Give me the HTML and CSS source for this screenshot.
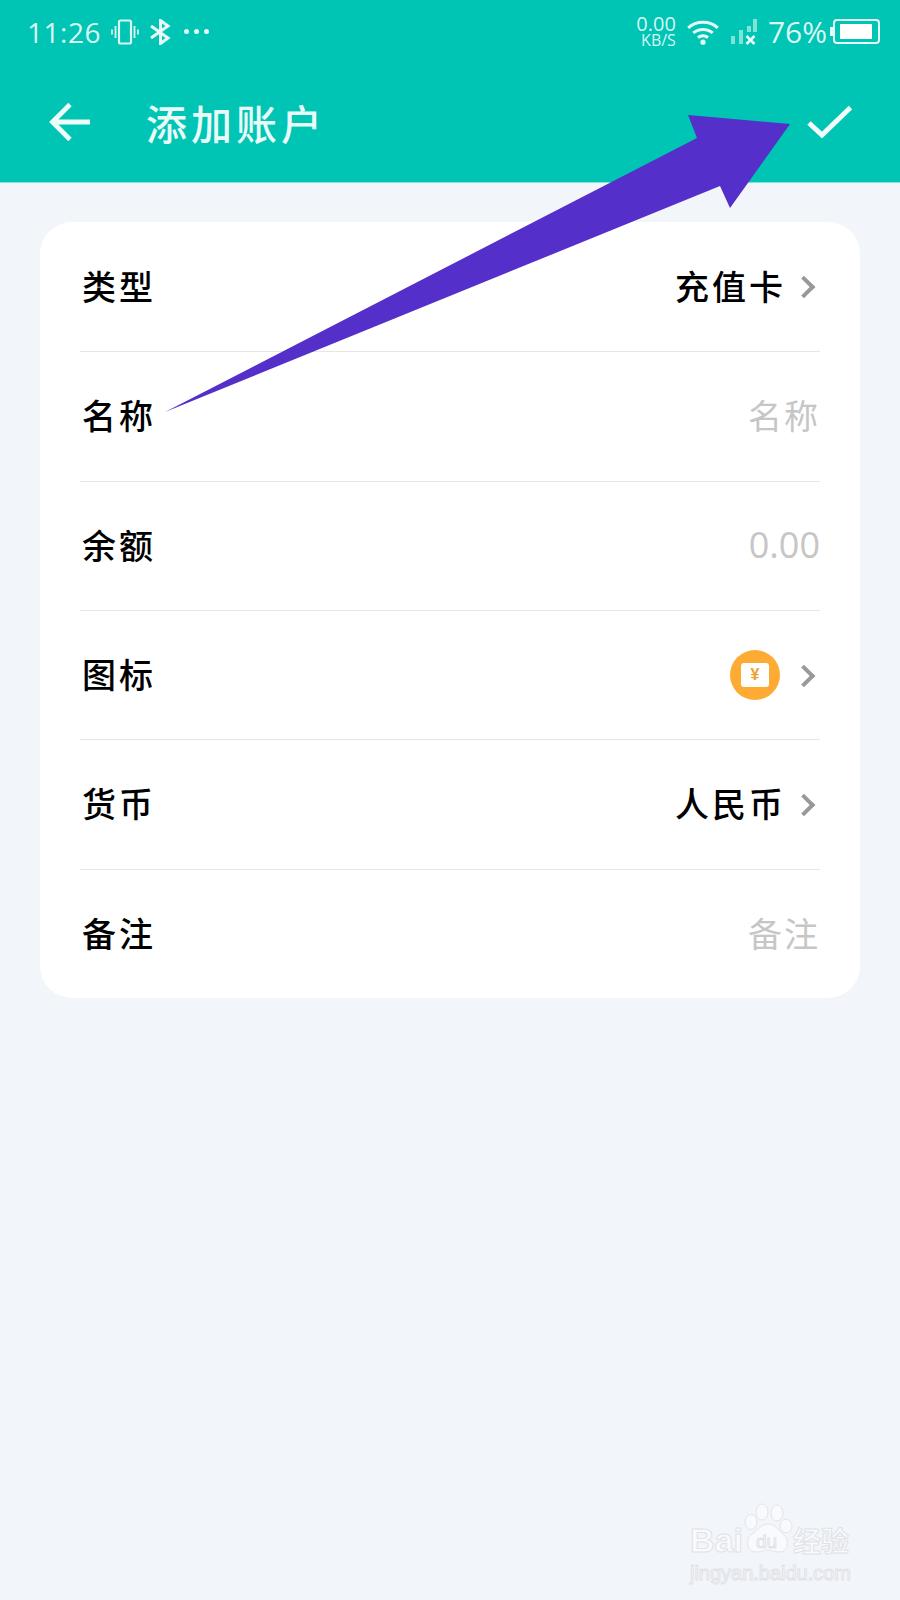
FILE: index.html
```html
<!DOCTYPE html>
<html lang="zh-CN">
<head>
  <meta charset="UTF-8">
  <meta name="viewport" content="width=device-width, initial-scale=1.0">
  <title>添加账户</title>
  <link rel="stylesheet" href="styles.css">
</head>
<body>
  <div class="page">
    <div class="header">
      <!-- Status bar -->
      <div class="status-bar">
        <div class="status-left">
          <span class="time">11:26</span>
          <svg class="icon-vibrate" viewBox="0 0 28 26" width="28" height="26">
            <rect x="8" y="1.5" width="12" height="23" rx="1.5" fill="none" stroke="#d9f7f3" stroke-width="2.200"/>
            <path d="M4.5 7v12M1 10.5v5M23.500 7v12M27 10.500v5" stroke="#d9f7f3" stroke-width="1.800" fill="none"/>
          </svg>
          <svg class="icon-bt" viewBox="0 0 22 26" width="22" height="26">
            <path d="M2 7l17 12-7.500 5.500V1.500L19 7 2 19" fill="none" stroke="#e6faf7" stroke-width="3"/>
          </svg>
          <div class="dots"><i></i><i></i><i></i></div>
        </div>
        <div class="status-right">
          <div class="speed"><span>0.00</span><span class="speed-unit">KB/S</span></div>
          <svg class="icon-wifi" viewBox="0 0 36 28" width="34" height="26">
            <path d="M2 9.500C11 1.500 25 1.500 34 9.500M7.500 15c6-5 15-5 21 0M12.500 20c3.500-2.500 7.500-2.500 11 0" fill="none" stroke="#e6faf7" stroke-width="3.200"/>
            <circle cx="18" cy="25" r="2.800" fill="#e6faf7"/>
          </svg>
          <svg class="icon-signal" viewBox="0 0 28 26" width="28" height="26">
            <rect x="1" y="17" width="4" height="8" fill="#7fe3d6"/>
            <rect x="9" y="11" width="4" height="14" fill="#7fe3d6"/>
            <rect x="17" y="7" width="4" height="6" fill="#7fe3d6"/>
            <rect x="23" y="0" width="4" height="13" fill="#7fe3d6"/>
            <path d="M16.500 17l8 8M24.500 17l-8 8" stroke="#e6faf7" stroke-width="2.600"/>
          </svg>
          <span class="battery-text">76%</span>
          <div class="battery"><div class="battery-fill"></div></div>
        </div>
      </div>

      <!-- Toolbar -->
      <div class="toolbar">
        <svg class="icon-back" viewBox="0 0 42 40" width="42" height="40">
          <path d="M21 2.500L3.500 20 21 37.500M3.500 20H41" fill="none" stroke="#eefcfa" stroke-width="4.800"/>
        </svg>
        <span class="title">添加账户</span>
        <svg class="icon-check" viewBox="0 0 46 34" width="46" height="34">
          <path d="M2 18l13 12L43.500 2.500" fill="none" stroke="#f2fdfb" stroke-width="5"/>
        </svg>
      </div>
    </div>

    <div class="content">
      <div class="card">
        <div class="row">
          <span class="label">类型</span>
          <div class="value"><span>充值卡</span><span class="chevron"></span></div>
        </div>
        <div class="row">
          <span class="label">名称</span>
          <div class="value placeholder"><span>名称</span></div>
        </div>
        <div class="row">
          <span class="label">余额</span>
          <div class="value placeholder"><span class="number">0.00</span></div>
        </div>
        <div class="row">
          <span class="label">图标</span>
          <div class="value">
            <div class="account-icon"><div class="account-icon-inner">¥</div></div>
            <span class="chevron"></span>
          </div>
        </div>
        <div class="row">
          <span class="label">货币</span>
          <div class="value"><span>人民币</span><span class="chevron"></span></div>
        </div>
        <div class="row">
          <span class="label">备注</span>
          <div class="value placeholder"><span>备注</span></div>
        </div>
      </div>
    </div>

    <!-- Annotation arrow drawn on top of the screenshot -->
    <svg class="arrow" viewBox="0 0 900 1600" width="900" height="1600">
      <polygon points="165,412 697,138 688,115 790,124 730,208 720,186" fill="#542fc9"/>
    </svg>

    <!-- Watermark -->
    <svg class="watermark" viewBox="0 0 180 90" width="180" height="90">
      <g fill="#f9fafd" stroke="#e2e4e9" stroke-width="1">
        <ellipse cx="70" cy="22" rx="6" ry="7.500"/>
        <ellipse cx="81" cy="12" rx="6" ry="8"/>
        <ellipse cx="96" cy="13" rx="6" ry="8"/>
        <ellipse cx="105" cy="26" rx="6" ry="7"/>
        <path d="M87 24c7 0 10 6 15 10 7 5 6 18-4 18-4 0-7-2-11-2-4 0-7 2-11 2-11 0-12-13-5-18 6-4 9-10 16-10z"/>
      </g>
      <g font-family="'Liberation Sans', sans-serif" font-weight="700" fill="#f9fafd" stroke="#e0e2e7" stroke-width="1">
        <text x="9" y="52" font-size="34">Bai</text>
        <text x="75" y="48" font-size="19" font-weight="400" fill="none">du</text>
        <text x="112" y="52" font-size="28" font-family="'Noto Sans CJK SC', sans-serif">经验</text>
        <text x="9" y="80" font-size="20" font-weight="400" textLength="161" lengthAdjust="spacing">jingyan.baidu.com</text>
      </g>
    </svg>
  </div>
</body>
</html>
```

FILE: styles.css
```css
* {
  box-sizing: border-box;
}

body {
  margin: 0;
  padding: 0;
  background-color: #f2f5fa;
  font-family: "Noto Sans CJK SC", "Noto Sans", sans-serif;
}

.page {
  position: relative;
  width: 900px;
  height: 1600px;
  overflow: hidden;
}

.header {
  height: 183px;
  background-color: #00c4b4;
  border-bottom: 1px solid #7fe6dc;
}

/* Status bar */
.status-bar {
  display: flex;
  justify-content: space-between;
  align-items: center;
  height: 62px;
  padding: 1px 20px 0 27px;
  color: #d9f7f3;
}

.status-left,
.status-right {
  display: flex;
  align-items: center;
}

.time {
  font-family: "Open Sans", sans-serif;
  font-size: 28px;
  letter-spacing: 0.5px;
  margin-right: 10px;
}

.icon-bt {
  margin-left: 10px;
}

.dots {
  display: flex;
  gap: 5px;
  margin-left: 13px;
}

.dots i {
  width: 5px;
  height: 5px;
  border-radius: 50%;
  background-color: #e6faf7;
}

.speed {
  display: flex;
  flex-direction: column;
  align-items: flex-end;
  font-family: "Open Sans", sans-serif;
  font-size: 20px;
  line-height: 17px;
  margin-right: 10px;
}

.speed-unit {
  font-size: 16px;
}

.icon-signal {
  margin-left: 10px;
}

.battery-text {
  font-family: "Open Sans", sans-serif;
  font-size: 30px;
  margin-left: 10px;
}

.battery {
  position: relative;
  width: 47px;
  height: 25px;
  margin-left: 6px;
  padding: 3px 5px;
  border: 2px solid #e6faf7;
  border-radius: 4px;
}

.battery::before {
  content: "";
  position: absolute;
  left: -5px;
  top: 6px;
  width: 3px;
  height: 9px;
  background-color: #e6faf7;
}

.battery-fill {
  height: 100%;
  width: 32px;
  background-color: #ffffff;
}

/* Toolbar */
.toolbar {
  display: flex;
  align-items: center;
  height: 120px;
  padding: 0 47px 0 49px;
}

.title {
  flex: 1;
  margin-left: 55px;
  color: #e8fbf8;
  font-size: 41px;
  font-weight: 500;
  letter-spacing: 4px;
}

/* Form card */
.content {
  padding: 39px 40px 0;
}

.card {
  display: grid;
  grid-auto-rows: 1fr;
  height: 776px;
  padding: 0 40px;
  background-color: #ffffff;
  border-radius: 32px;
}

.row {
  display: flex;
  justify-content: space-between;
  align-items: center;
  padding-bottom: 3px;
  border-top: 1px solid #e6e6e6;
}

.row:first-child {
  border-top: none;
}

.label,
.value {
  font-size: 34px;
  font-weight: 500;
  letter-spacing: 3px;
  color: #000000;
}

.label {
  padding-left: 2px;
}

.value {
  display: flex;
  align-items: center;
}

.placeholder {
  color: #c6c6c6;
  font-weight: 400;
  letter-spacing: 2px;
}

.number {
  font-family: "Open Sans", sans-serif;
  font-size: 36px;
  letter-spacing: 0;
}

.chevron {
  width: 16px;
  height: 16px;
  margin: 4px 8px 0 10px;
  border-top: 4px solid #999999;
  border-right: 4px solid #999999;
  transform: rotate(45deg);
}

.account-icon {
  display: flex;
  align-items: center;
  justify-content: center;
  width: 50px;
  height: 50px;
  margin: 2px 6px 0 0;
  border-radius: 50%;
  background-color: #fdab33;
}

.account-icon-inner {
  width: 28px;
  height: 24px;
  border-radius: 3px;
  background-color: #ffffff;
  color: #f0a030;
  font-family: "Liberation Sans", sans-serif;
  font-size: 16px;
  font-weight: 700;
  line-height: 24px;
  letter-spacing: 0;
  text-align: center;
}

/* Overlays */
.arrow {
  position: absolute;
  left: 0;
  top: 0;
}

.watermark {
  position: absolute;
  left: 681px;
  top: 1500px;
}
```
